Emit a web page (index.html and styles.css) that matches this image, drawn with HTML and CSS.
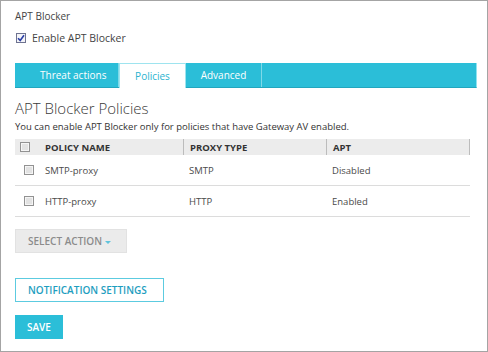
FILE: index.html
```html
<!doctype html>
<html lang="en">
  <head>
    <meta charset="UTF-8" />
    <title>APT Blocker</title>
    <link rel="stylesheet" href="styles.css">
  </head>
  <body>
    <div class="frame">
      <div class="page-title">APT Blocker</div>
      <label class="enable-row">
        <span class="check checked">
          <svg width="8" height="8" viewBox="0 0 8 8"><path d="M1 4.2 L3.2 6.4 L7 1.2" fill="none" stroke="#2a3fa6" stroke-width="1.6"/></svg>
        </span>
        Enable APT Blocker
      </label>

      <div class="tabs">
        <div class="tab first">Threat actions</div>
        <div class="tab active">Policies</div>
        <div class="tab">Advanced</div>
      </div>

      <h2 class="section-title">APT Blocker Policies</h2>
      <p class="hint">You can enable APT Blocker only for policies that have Gateway AV enabled.</p>

      <div class="table">
        <div class="row head">
          <div class="cell sel"><span class="check"></span></div>
          <div class="cell name">POLICY NAME</div>
          <div class="cell type">PROXY TYPE</div>
          <div class="cell apt">APT</div>
        </div>
        <div class="row">
          <div class="cell sel"><span class="check"></span></div>
          <div class="cell name">SMTP-proxy</div>
          <div class="cell type">SMTP</div>
          <div class="cell apt">Disabled</div>
        </div>
        <div class="row">
          <div class="cell sel"><span class="check"></span></div>
          <div class="cell name">HTTP-proxy</div>
          <div class="cell type">HTTP</div>
          <div class="cell apt">Enabled</div>
        </div>
      </div>

      <div class="actions">
        <button class="btn btn-gray">SELECT ACTION <span class="caret"></span></button>
      </div>
      <div class="actions notify">
        <button class="btn btn-outline">NOTIFICATION SETTINGS</button>
      </div>
      <div class="actions save">
        <button class="btn btn-primary">SAVE</button>
      </div>
    </div>
  </body>
</html>
```

FILE: styles.css
```css
* {
  margin: 0;
  padding: 0;
  box-sizing: border-box;
}
body {
  background: #fff;
  font-family: "Open Sans", "Liberation Sans", sans-serif;
  color: #333;
}
.frame {
  width: 488px;
  height: 352px;
  border: 1px solid #a4a4a4;
  padding: 8px 10px 0 14px;
  overflow: hidden;
}
.page-title {
  font-size: 10px;
  line-height: 14px;
  color: #444;
}
.enable-row {
  display: flex;
  align-items: center;
  gap: 6px;
  margin-top: 8px;
  margin-left: 1px;
  font-size: 10.5px;
  line-height: 14px;
  color: #444;
}
.check {
  display: inline-flex;
  align-items: center;
  justify-content: center;
  width: 10px;
  height: 10px;
  border: 1px solid #929292;
  background: #e2e2e2;
  box-shadow: inset 0 0 0 1px #f5f5f5;
}
.check.checked {
  border-color: #6e7390;
  background: #f4f4f8;
  box-shadow: none;
}
.tabs {
  display: flex;
  margin-top: 18px;
  height: 25px;
  background: #2bbed8;
  border-bottom: 1px solid #22a6be;
  border-right: 1px solid #8fe3f0;
}
.tab {
  display: flex;
  align-items: center;
  justify-content: center;
  padding: 0 8px;
  white-space: nowrap;
  color: #fff;
  font-size: 10px;
  border-right: 1px solid #7fd9e8;
}
.tab.first {
  width: 104px;
  justify-content: flex-start;
  padding-left: 25px;
}
.tab.active {
  width: 67px;
  background: #fff;
  color: #2bb3cf;
  border: 1px solid #9ee4ef;
  border-bottom: none;
  margin-bottom: -1px;
}
.tab:last-child {
  width: 76px;
}
.section-title {
  margin-top: 11px;
  font-size: 15px;
  font-weight: 300;
  line-height: 18px;
  color: #3a3a3a;
}
.hint {
  margin-top: 3px;
  font-size: 9.5px;
  line-height: 14px;
  color: #333;
}
.table {
  width: 455px;
  margin-top: 5px;
  font-size: 9.5px;
  color: #4a4a4a;
}
.row {
  display: flex;
  align-items: center;
  height: 31px;
  border-bottom: 1px solid #dcdcdc;
}
.row.head {
  height: 16px;
  background: #ececec;
  border-bottom: none;
  border-right: 1px solid #bcbcbc;
  font-weight: 700;
  color: #333;
}
.cell {
  height: 100%;
  display: flex;
  align-items: center;
}
.cell.sel {
  width: 30px;
  padding-left: 9px;
}
.row.head .cell.sel {
  padding-left: 5px;
}
.cell.name {
  width: 138px;
}
.cell.type {
  width: 143px;
  padding-left: 6px;
}
.cell.apt {
  flex: 1;
  padding-left: 6px;
}
.row.head .cell.type,
.row.head .cell.apt {
  border-left: 1px solid #bcbcbc;
}
.actions {
  display: flex;
  margin-top: 12px;
}
.actions.notify {
  margin-top: 25px;
}
.actions.save {
  margin-top: 13px;
}
.btn {
  height: 24px;
  padding: 0 12px;
  border: none;
  font-family: inherit;
  font-size: 10px;
  font-weight: 600;
  display: inline-flex;
  align-items: center;
}
.btn-gray {
  width: 112px;
  background: #ebebeb;
  color: #8b8b8b;
  border: 1px solid #e2e2e2;
}
.caret {
  display: inline-block;
  margin-left: 3px;
  margin-top: 2px;
  border-left: 3px solid transparent;
  border-right: 3px solid transparent;
  border-top: 3px solid #5fc3dc;
}
.btn-outline {
  width: 149px;
  background: #fff;
  color: #1e9ec0;
  border: 1px solid #5ccbe0;
}
.btn-primary {
  width: 48px;
  background: #2bbed8;
  color: #fff;
}
```
